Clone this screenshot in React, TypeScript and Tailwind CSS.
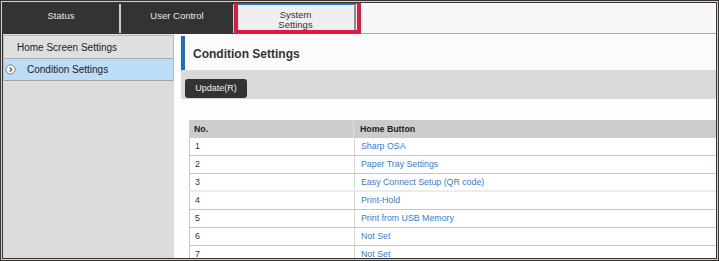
const rows: { no: string; label: string }[] = [
  { no: "1", label: "Sharp OSA" },
  { no: "2", label: "Paper Tray Settings" },
  { no: "3", label: "Easy Connect Setup (QR code)" },
  { no: "4", label: "Print-Hold" },
  { no: "5", label: "Print from USB Memory" },
  { no: "6", label: "Not Set" },
  { no: "7", label: "Not Set" },
];

function CircleChevron() {
  return (
    <svg width="11" height="11" viewBox="0 0 11 11" className="shrink-0">
      <circle cx="5.5" cy="5.5" r="4.6" fill="#fafafa" stroke="#7d7d7d" strokeWidth="1" />
      <path d="M4.6 3.4 L6.7 5.5 L4.6 7.6" fill="none" stroke="#555" strokeWidth="1.3" />
    </svg>
  );
}

function Tabs() {
  return (
    <div className="flex h-[31px] bg-[#333333] text-[9.5px]">
      <div className="flex w-[116px] items-center justify-center pb-[4px] text-[#e6e6e6]">
        Status
      </div>
      <div className="my-[1px] w-[2px] bg-[#c9c9c9]" />
      <div className="flex w-[112px] items-center justify-center pb-[4px] text-[#e6e6e6]">
        User Control
      </div>
      <div className="my-[1px] w-[2px] bg-[#c9c9c9]" />
      <div className="flex w-[121px] flex-col items-center border-x-2 border-t-2 border-x-[#8c8c8c] border-t-[#2e7bcf] bg-[#efefef] pt-[5px] leading-[9.5px] text-[#333]">
        <span>System</span>
        <span>Settings</span>
      </div>
      <div className="flex-1 border-b border-[#a8a8a8] bg-[#f8f8f8]" />
    </div>
  );
}

function Sidebar() {
  return (
    <div className="w-[171px] bg-[#dcdcdc] pt-[1px] text-[10px] text-[#222]">
      <div className="border-x border-t border-[#b9b9b9]">
        <div className="flex h-[23px] items-center border-b border-[#ababab] bg-[#dfdfdf] pl-[13px]">
          Home Screen Settings
        </div>
        <div className="flex h-[22px] items-center gap-[11px] border-b border-[#a3a3a3] bg-[#bddcf8] pl-[1px]">
          <CircleChevron />
          <span>Condition Settings</span>
        </div>
      </div>
    </div>
  );
}

function ConditionTable() {
  return (
    <div className="ml-[8px] w-[600px] text-[8.8px]">
      <div className="grid h-[18px] grid-cols-[164px_1fr] items-center bg-[#cccccc] pt-[1px] font-bold text-[#222]">
        <span className="pl-[5px]">No.</span>
        <span className="border-l border-[#dedede] pl-[6px] leading-[17px]">
          Home Button
        </span>
      </div>
      {rows.map((row, i) => (
        <div
          key={i}
          className={`grid h-[18px] grid-cols-[164px_1fr] items-center border-l border-[#c6c6c6] bg-white ${i === 2 ? "border-b-2 border-b-[#ececec]" : "border-b border-b-[#c6c6c6]"}`}
        >
          <span className="pl-[5px] pt-[1px] text-[#333]">{row.no}</span>
          <span className="flex h-full items-center border-l border-[#d6d6d6] pl-[6px] pt-[1px] text-[#2f80d6]">
            {row.label}
          </span>
        </div>
      ))}
    </div>
  );
}

export default function App() {
  return (
    <div className="relative h-[261px] w-[719px] overflow-hidden border-[3px] border-double border-[#3a3431] bg-[#d0d0d0] font-['Liberation_Sans',Arial,sans-serif]">
      <Tabs />
      <div className="flex h-[224px]">
        <Sidebar />
        <div className="flex-1 overflow-hidden bg-[#fdfdfd] pl-[7px] pt-[2px]">
          <div className="flex h-[34px] items-center border-l-4 border-[#1c6fbf] bg-[#fbfbfb] pl-[8px] pt-[2px] text-[12px] font-bold text-[#333]">
            Condition Settings
          </div>
          <div className="h-[29px] bg-[#d9d9d9] pl-[4px] pt-[4px]">
            <button className="h-[19px] w-[62px] rounded-[3px] bg-[#333333] text-[9px] text-[#f0f0f0]">
              Update(R)
            </button>
          </div>
          <div className="h-[21px]" />
          <ConditionTable />
        </div>
      </div>
      <div className="absolute left-[231px] top-[-3px] h-[34px] w-[127px] border-4 border-[#e3173f]" />
    </div>
  );
}
